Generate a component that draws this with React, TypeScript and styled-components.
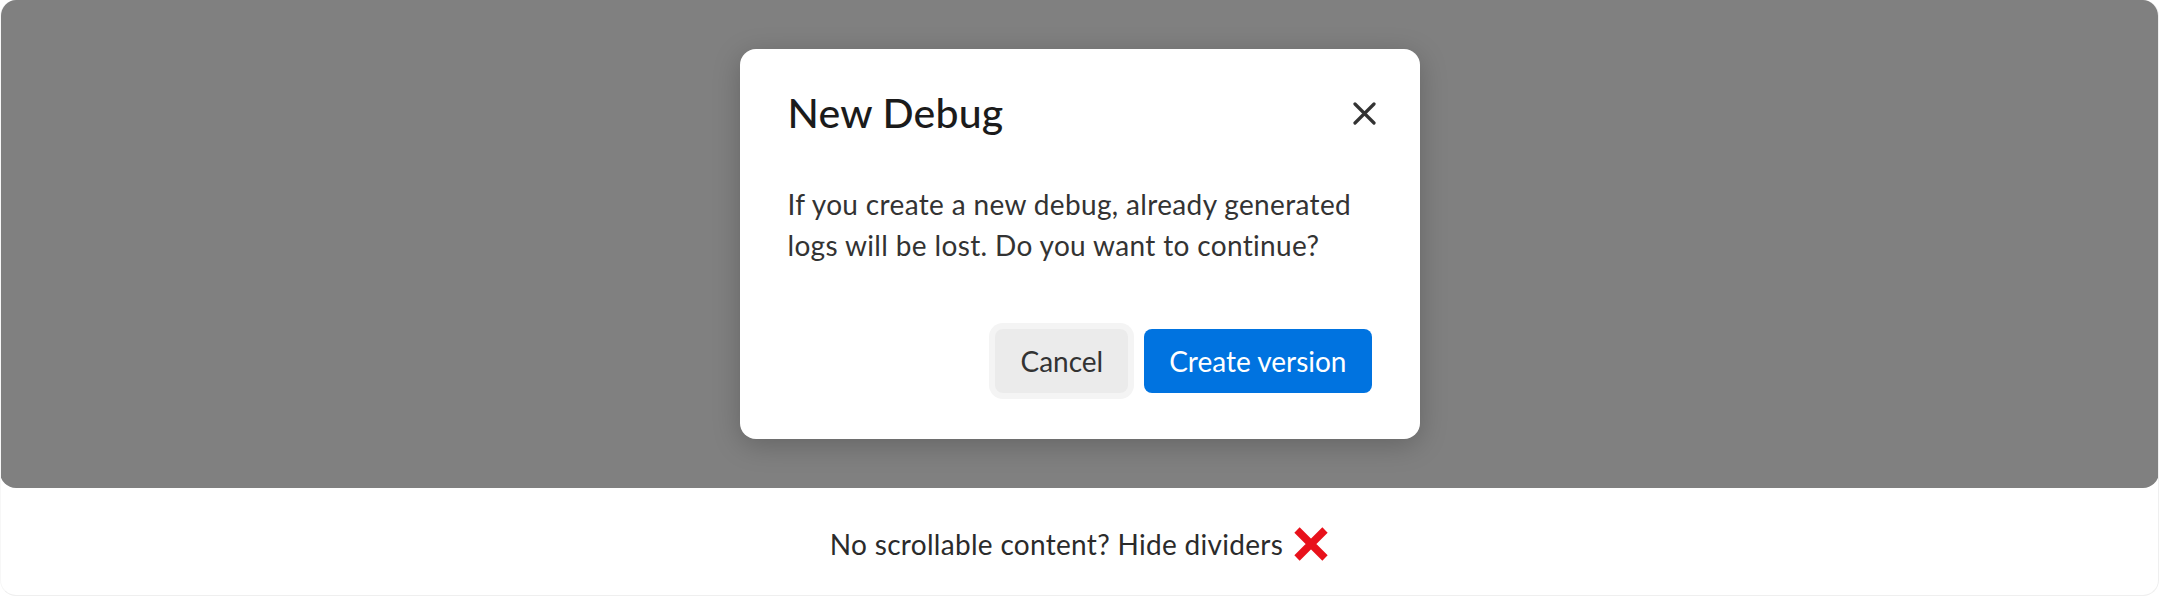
import * as React from 'react';
import styled, { createGlobalStyle } from 'styled-components';

const GlobalStyle = createGlobalStyle`
  html,
  body {
    margin: 0;
    padding: 0;
    background: #ffffff;
  }
  body {
    font-family: Lato, 'Open Sans', 'Noto Sans', sans-serif;
    -webkit-font-smoothing: antialiased;
  }
`;

export default function App() {
  return (
    <>
      <GlobalStyle />
      <Frame>
        <Backdrop>
          <Dialog role="dialog" aria-labelledby="dialog-title">
            <DialogHeader>
              <DialogTitle id="dialog-title">New Debug</DialogTitle>
              <CloseButton aria-label="Close">
                <svg width="23" height="23" viewBox="0 0 23 23" fill="none">
                  <path d="M2 2L21 21M21 2L2 21" stroke="#333333" strokeWidth="3.2" strokeLinecap="round" />
                </svg>
              </CloseButton>
            </DialogHeader>
            <DialogBody>
              If you create a new debug, already generated
              <br />
              logs will be lost. Do you want to continue?
            </DialogBody>
            <DialogFooter>
              <Button $variant="secondary">Cancel</Button>
              <Button $variant="primary">Create version</Button>
            </DialogFooter>
          </Dialog>
        </Backdrop>
        <Caption>
          No scrollable content? Hide dividers
          <CrossMark aria-hidden="true" viewBox="0 0 36 36">
            <path d="M4 4L32 32M32 4L4 32" stroke="#e8111b" strokeWidth="7.5" strokeLinecap="butt" />
          </CrossMark>
        </Caption>
      </Frame>
    </>
  );
}

const Frame = styled.div`
  box-sizing: border-box;
  width: 2159px;
  height: 596px;
  display: flex;
  flex-direction: column;
  border: 1px solid #efefef;
  border-top: none;
  border-left-color: #f7f7f7;
  border-radius: 16px;
  overflow: hidden;
  background: #ffffff;
`;

const Backdrop = styled.div`
  height: 488px;
  flex-shrink: 0;
  display: flex;
  align-items: center;
  justify-content: center;
  background: #808080;
  border-radius: 8px 14px 16px 16px;
  margin: 0 -1px;
`;

const Dialog = styled.section`
  box-sizing: border-box;
  width: 680px;
  height: 390px;
  padding: 40px 48px 46px;
  display: flex;
  flex-direction: column;
  background: #ffffff;
  border-radius: 16px;
  box-shadow: 0 6px 28px rgba(0, 0, 0, 0.22);
`;

const DialogHeader = styled.header`
  display: flex;
  align-items: center;
  justify-content: space-between;
`;

const DialogTitle = styled.h2`
  margin: 0;
  font-size: 41px;
  line-height: 48px;
  font-weight: 500;
  letter-spacing: 0.2px;
  color: #1b1b1b;
`;

const CloseButton = styled.button`
  width: 32px;
  height: 32px;
  margin-right: -9px;
  padding: 0;
  border: none;
  background: transparent;
  display: flex;
  align-items: center;
  justify-content: center;
  cursor: pointer;
`;

const DialogBody = styled.p`
  margin: 47px 0 0;
  font-size: 28px;
  line-height: 41px;
  letter-spacing: 0.35px;
  color: #333333;
`;

const DialogFooter = styled.footer`
  margin-top: auto;
  display: flex;
  justify-content: flex-end;
  gap: 16px;
`;

const Button = styled.button<{ $variant: 'primary' | 'secondary' }>`
  height: 64px;
  padding: 0 25px;
  border: none;
  border-radius: 8px;
  font-family: inherit;
  font-size: 28px;
  cursor: pointer;
  background: ${({ $variant }) => ($variant === 'primary' ? '#0073e0' : '#ebebeb')};
  color: ${({ $variant }) => ($variant === 'primary' ? '#ffffff' : '#333333')};
  box-shadow: ${({ $variant }) => ($variant === 'secondary' ? '0 0 0 6px #f4f4f4' : 'none')};
`;

const Caption = styled.div`
  flex: 1;
  display: flex;
  align-items: center;
  justify-content: center;
  gap: 10px;
  padding-top: 4px;
  font-size: 28px;
  letter-spacing: 0.3px;
  color: #2b2b2b;
`;

const CrossMark = styled.svg`
  width: 36px;
  height: 36px;
`;
